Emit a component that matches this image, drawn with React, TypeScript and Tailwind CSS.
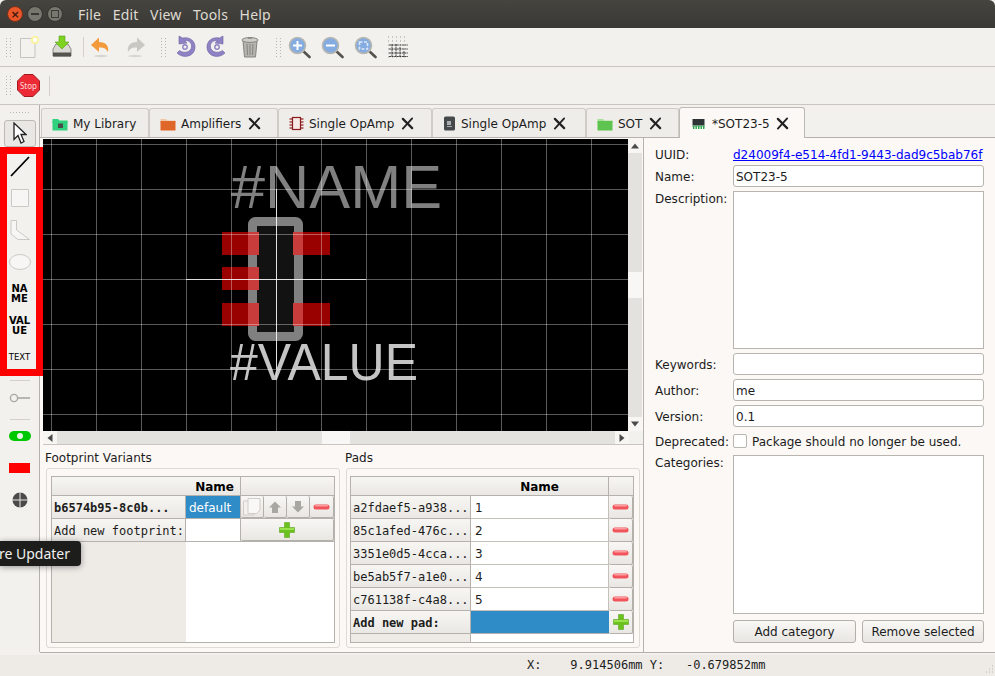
import React from 'react';

const Grip = () => (
  <div className="grid grid-cols-2 gap-x-[2px] gap-y-[2px] w-[5px]">
    {Array.from({ length: 14 }).map((_, i) => (
      <span key={i} className="w-[1px] h-[1px] bg-[#b9b6b0]" />
    ))}
  </div>
);

const Sep = () => <div className="w-[1px] h-[20px] bg-[#d3d0ca]" />;

const TabX = () => (
  <svg width="13" height="13" viewBox="0 0 14 13" className="shrink-0">
    <path d="M2 1.5 L12 11.5" stroke="#222" strokeWidth="2.4" strokeLinecap="round" />
    <path d="M12 1 L2 12" stroke="#222" strokeWidth="2" strokeLinecap="round" />
  </svg>
);

const Folder = ({ body, back, chip }: { body: string; back: string; chip?: boolean }) => (
  <svg width="16" height="14" viewBox="0 0 16 14" className="shrink-0">
    <path d="M0.5 2 H6 L7.5 3.5 H15.5 V6 H0.5 Z" fill={back} />
    <rect x="0.5" y="4" width="15" height="9.5" fill={body} />
    {chip && <rect x="6" y="6.5" width="5" height="4.5" fill="#4a4a4a" />}
  </svg>
);

const RedChip = () => (
  <svg width="15" height="15" viewBox="0 0 15 15" className="shrink-0">
    <rect x="3.5" y="1.5" width="8" height="12" fill="#f7e7e5" stroke="#8c1c1c" strokeWidth="1.2" />
    {[3, 6, 9, 12].map((y) => (
      <g key={y}>
        <path d={`M0.5 ${y} H3`} stroke="#8c1c1c" strokeWidth="1.2" />
        <path d={`M12 ${y} H14.5`} stroke="#8c1c1c" strokeWidth="1.2" />
      </g>
    ))}
  </svg>
);

const DarkChip = () => (
  <svg width="13" height="15" viewBox="0 0 13 15" className="shrink-0">
    <rect x="1" y="0.5" width="11" height="14" rx="1.5" fill="#45494b" />
    <rect x="4" y="5" width="4" height="4" fill="#a9adad" />
    <path d="M4 10.5 H9" stroke="#a9adad" />
  </svg>
);

const GreenChip = () => (
  <svg width="15" height="13" viewBox="0 0 15 13" className="shrink-0">
    <rect x="1.5" y="2" width="12" height="6.5" fill="#2e3436" />
    {[2, 4.5, 7, 9.5, 12].map((x) => (
      <rect key={x} x={x} y="8.5" width="1.4" height="3.5" fill="#27a04a" />
    ))}
    <rect x="1" y="9" width="13" height="1" fill="#3fb860" opacity="0.6" />
  </svg>
);

const tabs = [
  { w: 'w-[108px]', label: 'My Library', icon: <Folder body="#2fd17f" back="#2fd17f" chip />, close: false },
  { w: 'w-[129px]', label: 'Amplifiers', icon: <Folder body="#e0672a" back="#f0c8a8" />, close: true },
  { w: 'w-[154px]', label: 'Single OpAmp', icon: <RedChip />, close: true },
  { w: 'w-[154px]', label: 'Single OpAmp', icon: <DarkChip />, close: true },
  { w: 'w-[93px]', label: 'SOT', icon: <Folder body="#5fc34f" back="#a9df9a" />, close: true },
];

const NewDoc = () => (
  <svg width="22" height="24" viewBox="0 0 22 24">
    <path d="M1.5 3.5 H16 V22.5 H1.5 Z" fill="#f3f2ee" stroke="#c4c3bd" />
    <circle cx="16" cy="5" r="4" fill="#f9f29a" />
    <circle cx="16" cy="5" r="2.2" fill="#fff" />
  </svg>
);

const Install = () => (
  <svg width="24" height="24" viewBox="0 0 24 24">
    <path d="M3 14 L6 9 H18 L21 14 V21 H3 Z" fill="#d9d8d3" stroke="#8c8b86" />
    <rect x="3" y="17.5" width="18" height="4" fill="#55534e" />
    <path d="M9 1 H15 V7 H19 L12 14 L5 7 H9 Z" fill="#7ed321" stroke="#5a9e1a" strokeWidth="0.6" />
  </svg>
);

const Undo = ({ flip, color }: { flip?: boolean; color: string }) => (
  <svg width="20" height="22" viewBox="0 0 20 22" className={flip ? '-scale-x-100' : ''}>
    <path d="M1 9 L9 1.5 V6 C16 6 19 10 18 16 C16 12 13 11 9 11.5 V16 Z" fill={color} />
    <ellipse cx="11" cy="20" rx="7" ry="1.2" fill="#d8d6d1" />
  </svg>
);

const Rotate = ({ flip }: { flip?: boolean }) => (
  <svg width="21" height="24" viewBox="0 0 21 24" className={flip ? '-scale-x-100' : ''}>
    <path d="M4 1 L4 9 L12 8 L9.5 5.6 C14 5 17 8 16.5 12 C16 17 9 19 4.5 15.5 L2 18 C8 24 19 22 20 13 C20.5 6 15 1.5 7.5 3 Z" fill="#8f82c4" stroke="#6d62a3" strokeWidth="0.6" />
    <circle cx="10" cy="12" r="2.2" fill="none" stroke="#8f82c4" strokeWidth="1.4" />
  </svg>
);

const Trash = () => (
  <svg width="18" height="22" viewBox="0 0 18 22">
    <path d="M2 5 L3.5 21 H14.5 L16 5 Z" fill="#b5b4ae" stroke="#85847e" />
    <ellipse cx="9" cy="4" rx="8" ry="2.4" fill="#cfcec9" stroke="#85847e" />
    <path d="M6 8 L6.5 19 M9 8 V19 M12 8 L11.5 19" stroke="#85847e" />
    <path d="M7 2 H11" stroke="#85847e" strokeWidth="1.5" />
  </svg>
);

const Zoom = ({ mark }: { mark: 'in' | 'out' | 'fit' }) => (
  <svg width="23" height="23" viewBox="0 0 23 23">
    <path d="M14 14 L21.5 21" stroke="#55534e" strokeWidth="2.6" strokeLinecap="round" />
    <circle cx="9.5" cy="9.5" r="8" fill="#84ace0" stroke="#b8b7b1" strokeWidth="1.6" />
    {mark !== 'fit' && <path d="M5 9.5 H14" stroke="#fff" strokeWidth="2" />}
    {mark === 'in' && <path d="M9.5 5 V14" stroke="#fff" strokeWidth="2" />}
    {mark === 'fit' && <rect x="5.5" y="6" width="8" height="7" fill="none" stroke="#dce8f8" strokeWidth="1.6" strokeDasharray="3 1.5" />}
  </svg>
);

const GridIcon = () => (
  <svg width="22" height="22" viewBox="0 0 22 22">
    {[1, 5, 9, 13, 17, 21].map((p) => (
      <g key={p}>
        <path d={`M1 ${p} H21`} stroke="#9a9994" strokeDasharray="1 3" />
      </g>
    ))}
    <path d="M2 9 H21 M2 13 H21 M2 17 H21 M2 20.5 H21 M5 8 V21 M9 8 V21 M13 11 V21 M17 15 V21" stroke="#333" strokeWidth="0.9" strokeDasharray="2 0.6" />
  </svg>
);

const Stop = () => (
  <svg width="23" height="23" viewBox="0 0 23 23">
    <path d="M7 0.5 H16 L22.5 7 V16 L16 22.5 H7 L0.5 16 V7 Z" fill="#ec2b36" stroke="#a31a20" />
    <text x="11.5" y="14.5" textAnchor="middle" fontSize="8" fill="#fbdcdc" className="font-['Noto_Sans',sans-serif]">Stop</text>
  </svg>
);

const Minus = ({ w = 17 }: { w?: number }) => (
  <svg width={w} height="6" viewBox="0 0 17 6">
    <rect x="0.5" y="0.5" width="16" height="5" rx="2.5" fill="#f2545b" />
    <rect x="2" y="1" width="13" height="1.5" rx="0.7" fill="#fb9ca0" />
  </svg>
);

const Plus = () => (
  <svg width="16" height="16" viewBox="0 0 16 16">
    <path d="M5.5 0.5 H10.5 V5.5 H15.5 V10.5 H10.5 V15.5 H5.5 V10.5 H0.5 V5.5 H5.5 Z" fill="#6cc21d" stroke="#4f9c12" strokeWidth="0.5" />
    <path d="M1 6 H15 V8 H1 Z" fill="#9ae04f" />
  </svg>
);

const CellBtn = ({ children, className }: { children: React.ReactNode; className: string }) => (
  <div className={`h-full flex items-center justify-center border-r border-b border-[#b3b0aa] rounded-[2px] bg-gradient-to-b from-[#f8f7f5] to-[#e9e7e3] ${className}`}>
    {children}
  </div>
);

const Arrow = ({ up }: { up?: boolean }) => (
  <svg width="14" height="14" viewBox="0 0 14 14" className={up ? '' : 'rotate-180'}>
    <path d="M7 1.5 L13 7.5 H10 V13 H4 V7.5 H1 Z" fill="#a8a7a2" />
  </svg>
);

const CopyIcon = () => (
  <svg width="18" height="18" viewBox="0 0 18 18">
    <path d="M0.5 3 H11 V17 H0.5 Z" fill="#f2f1ee" stroke="#cfcdc8" />
    <path d="M5 0.5 H17 V12 L13.5 15.5 H5 Z" fill="#f9f8f6" stroke="#cfcdc8" />
  </svg>
);

const headerCell = 'bg-gradient-to-b from-[#f7f6f3] to-[#eae8e4] border-r border-b border-[#b5b2ad]';

const Input = ({ value }: { value?: string }) => (
  <div className="h-[22px] w-[251px] bg-white border border-[#b8b5af] rounded-[3px] px-[2px] pt-[1px] flex items-center text-[12px]">
    {value}
  </div>
);

const Label = ({ children }: { children: React.ReactNode }) => (
  <div className="w-[78px] shrink-0 text-[12px] leading-[14px] pt-[1px]">{children}</div>
);

const Button = ({ children, w }: { children: React.ReactNode; w: string }) => (
  <div className={`${w} h-[23px] border border-[#b3b0aa] rounded-[3px] bg-gradient-to-b from-[#f9f8f6] to-[#e8e6e2] flex items-center justify-center`}>
    {children}
  </div>
);

const padRows = [
  ['a2fdaef5-a938...', '1'],
  ['85c1afed-476c...', '2'],
  ['3351e0d5-4cca...', '3'],
  ['be5ab5f7-a1e0...', '4'],
  ['c761138f-c4a8...', '5'],
];

const Canvas = () => {
  const xs = [8, 53, 98, 143, 188, 233, 278, 323, 368, 413, 458, 503, 548];
  const ys = [5, 50, 95, 140, 185, 230, 275];
  return (
    <svg width="585" height="292" viewBox="0 0 585 292" className="block bg-black shrink-0">
      <text x="188" y="69" fontSize="62" fill="#808080" textLength="211" lengthAdjust="spacingAndGlyphs" className="font-['Liberation_Sans',sans-serif]">#NAME</text>
      <text x="187" y="241" fontSize="52" fill="#c4c4c4" textLength="188" lengthAdjust="spacingAndGlyphs" className="font-['Liberation_Sans',sans-serif]">#VALUE</text>
      {[
        [179, 93],
        [179, 128],
        [179, 164],
        [250, 93],
        [250, 164],
      ].map(([x, y], i) => (
        <rect key={i} x={x} y={y} width="37" height="23" fill="#990000" />
      ))}
      <rect x="209.5" y="82.5" width="46" height="115" rx="3" fill="#121212" stroke="#808080" strokeWidth="9" />
      {[
        [205, 93, 11],
        [205, 128, 11],
        [205, 164, 11],
        [250, 93, 10],
        [250, 164, 10],
      ].map(([x, y, w], i) => (
        <rect key={i} x={x} y={y} width={w} height="23" fill="#c93c3c" />
      ))}
      {xs.map((x) => (
        <path key={x} d={`M${x + 0.5} 0 V292`} stroke="#ffffff" strokeOpacity="0.35" />
      ))}
      {ys.map((y) => (
        <path key={y} d={`M0 ${y + 0.5} H585`} stroke="#ffffff" strokeOpacity="0.35" />
      ))}
      <path d="M143 140.5 H323 M233.5 50 V230" stroke="#ffffff" strokeOpacity="0.8" />
    </svg>
  );
};

const ScrollTri = ({ d }: { d: string }) => (
  <svg width="8" height="8" viewBox="0 0 8 8">
    <path d={d} fill="#4a4a4a" />
  </svg>
);

export default function App() {
  return (
    <div className="relative w-[995px] h-[676px] overflow-hidden flex flex-col bg-[#f2f1ed] text-[#1c1c1c] text-[12px] font-['DejaVu_Sans',sans-serif]">
      {/* title bar + menu */}
      <div className="h-[28px] shrink-0 flex items-center bg-gradient-to-b from-[#45443f] to-[#3a3935] rounded-t-[6px] pl-[7px]">
        <div className="flex items-center gap-[4px]">
          <span className="w-[16px] h-[16px] rounded-full bg-[#e8562a] border border-[#7a3018] flex items-center justify-center text-[11px] leading-none text-[#3c1a0c] font-bold">×</span>
          <span className="w-[16px] h-[16px] rounded-full bg-[#77766f] border border-[#33322e] flex items-center justify-center">
            <span className="w-[8px] h-[2px] bg-[#3a3935]" />
          </span>
          <span className="w-[16px] h-[16px] rounded-full bg-[#77766f] border border-[#33322e] flex items-center justify-center">
            <span className="w-[8px] h-[8px] border border-[#3a3935]" />
          </span>
        </div>
        <div className="ml-[15px] flex gap-[11.5px] tracking-[0.2px] text-[14px] text-[#dfdbd2] font-['Noto_Sans',sans-serif]">
          <span>File</span>
          <span>Edit</span>
          <span>View</span>
          <span>Tools</span>
          <span>Help</span>
        </div>
      </div>

      {/* main toolbar */}
      <div className="h-[39px] shrink-0 flex items-center border-b border-[#c9c6c0] pl-[6px]">
        <Grip />
        <div className="ml-[7px] w-[24px] flex justify-center"><NewDoc /></div>
        <div className="ml-[8px] w-[24px] flex justify-center"><Install /></div>
        <div className="ml-[9px]"><Sep /></div>
        <div className="ml-[6px]"><Undo color="#f39a3c" /></div>
        <div className="ml-[16px]"><Undo flip color="#c9c8c3" /></div>
        <div className="ml-[15px]"><Grip /></div>
        <div className="ml-[9px]"><Rotate /></div>
        <div className="ml-[10px]"><Rotate flip /></div>
        <div className="ml-[14px]"><Trash /></div>
        <div className="ml-[17px]"><Grip /></div>
        <div className="ml-[7px]"><Zoom mark="in" /></div>
        <div className="ml-[10px]"><Zoom mark="out" /></div>
        <div className="ml-[10px]"><Zoom mark="fit" /></div>
        <div className="ml-[10px]"><GridIcon /></div>
      </div>

      {/* second toolbar */}
      <div className="h-[38px] shrink-0 flex items-center border-b border-[#c9c6c0] pl-[6px]">
        <Grip />
        <div className="ml-[6px]"><Stop /></div>
        <div className="ml-[9px]"><Sep /></div>
      </div>

      <div className="flex-1 min-h-0 flex">
        {/* left tools */}
        <div className="w-[40px] shrink-0 flex flex-col items-center border-r border-[#b5b2ad] pt-[7px] mb-[3px]">
          <div className="flex gap-[2px] h-[2px]">
            {Array.from({ length: 7 }).map((_, i) => (
              <span key={i} className="w-[1px] h-[1px] bg-[#b9b6b0]" />
            ))}
          </div>
          <div className="mt-[6px] w-[32px] h-[27px] border border-[#bdbab4] rounded-[3px] bg-[#e9e7e3] flex items-center justify-center">
            <svg width="14" height="23" viewBox="0 0 14 23">
              <path d="M1 1 V17.5 L5 13.5 L8 21 L11 19.5 L8 12.5 H13 Z" fill="#fff" stroke="#222" strokeWidth="1.3" />
            </svg>
          </div>
          <div className="h-[32px] mt-[3px] flex items-center">
            <svg width="22" height="22" viewBox="0 0 22 22"><path d="M2 21 L20 2" stroke="#000" strokeWidth="1.8" /></svg>
          </div>
          <div className="h-[32px] flex items-center">
            <div className="w-[18px] h-[18px] bg-[#f7f6f4] border border-[#cbc9c4] rounded-[1px]" />
          </div>
          <div className="h-[32px] flex items-center">
            <svg width="20" height="20" viewBox="0 0 20 20"><path d="M1 0.5 H6.5 V10 L19.5 19.5 H8 L1 14 Z" fill="#f7f6f4" stroke="#cbc9c4" /></svg>
          </div>
          <div className="h-[32px] flex items-center">
            <svg width="22" height="16" viewBox="0 0 22 16"><ellipse cx="11" cy="8" rx="10.5" ry="7.5" fill="#f7f6f4" stroke="#cbc9c4" /></svg>
          </div>
          <div className="h-[32px] flex items-center justify-center text-center text-[10px] leading-[10px] font-bold text-black w-[22px] break-all">NA<br />ME</div>
          <div className="h-[32px] flex items-center justify-center text-center text-[10px] leading-[10px] font-bold text-black">VAL<br />UE</div>
          <div className="h-[31px] flex items-center text-[8.5px] text-black font-medium">TEXT</div>
          <div className="w-[20px] h-[1px] bg-[#d3d0ca] mt-[7px]" />
          <div className="h-[38px] pb-[4px] flex items-center">
            <svg width="22" height="10" viewBox="0 0 22 10">
              <circle cx="5" cy="5" r="3.6" fill="none" stroke="#a9a8a3" strokeWidth="1.4" />
              <path d="M9 5 H21" stroke="#a9a8a3" strokeWidth="1.6" />
            </svg>
          </div>
          <div className="w-[20px] h-[1px] bg-[#d3d0ca]" />
          <div className="h-[32px] flex items-center">
            <div className="w-[22px] h-[10px] rounded-full bg-[#00c800] flex items-center justify-center">
              <span className="w-[6px] h-[6px] rounded-full bg-[#e5f5e5]" />
            </div>
          </div>
          <div className="h-[32px] flex items-center">
            <div className="w-[21px] h-[10px] bg-[#ff0000]" />
          </div>
          <div className="h-[32px] flex items-center">
            <svg width="16" height="16" viewBox="0 0 16 16">
              <circle cx="8" cy="8" r="7.5" fill="#4a4a4a" />
              <path d="M0 8 H16 M8 0 V16" stroke="#e8e6e2" strokeWidth="1" />
            </svg>
          </div>
        </div>

        <div className="flex-1 min-w-0 flex flex-col">
          {/* tabs */}
          <div className="h-[33px] shrink-0 flex items-end border-b border-[#b5b2ad] pl-[1px]">
            {tabs.map((t, i) => (
              <div key={i} className={`${t.w} h-[29px] flex items-center pl-[10px] pt-[1px] gap-[5px] border border-b-0 border-[#cfccc6] rounded-t-[3px] bg-[#efedea]`}>
                {t.icon}
                <span className="whitespace-nowrap">{t.label}</span>
                {t.close && <span className="ml-[2px]"><TabX /></span>}
              </div>
            ))}
            <div className="w-[126px] h-[31px] -mb-[1px] flex items-center pl-[11px] pt-[1px] gap-[6px] border border-b-0 border-[#bdbab4] rounded-t-[3px] bg-[#fbf8f5]">
              <GreenChip />
              <span className="whitespace-nowrap">*SOT23-5</span>
              <TabX />
            </div>
          </div>

          <div className="flex-1 min-h-0 flex bg-[#fbf8f5] border-b border-[#b5b2ad] mb-[2px]">
            {/* editor column */}
            <div className="w-[604px] shrink-0 flex flex-col border-r border-[#b5b2ad] pl-[3px]">
              <div className="flex mt-[1px]">
                <Canvas />
                <div className="w-[14px] h-[292px] flex flex-col bg-[#e3e2de]">
                  <div className="h-[14px] bg-[#f7f6f3] flex items-center justify-center"><ScrollTri d="M4 1.5 L8 6.5 H0 Z" /></div>
                  <div className="h-[119px]" />
                  <div className="h-[26px] bg-[#f8f7f5]" />
                  <div className="flex-1" />
                  <div className="h-[14px] bg-[#f7f6f3] flex items-center justify-center"><ScrollTri d="M4 6.5 L0 1.5 H8 Z" /></div>
                </div>
              </div>
              <div className="flex h-[14px] shrink-0 bg-[#e3e2de] border-b border-[#c9c6c0]">
                <div className="w-[14px] bg-[#f7f6f3] flex items-center justify-center"><ScrollTri d="M1.5 4 L6.5 0 V8 Z" /></div>
                <div className="w-[265px]" />
                <div className="w-[28px] bg-[#f8f7f5]" />
                <div className="flex-1" />
                <div className="w-[14px] bg-[#f7f6f3] flex items-center justify-center"><ScrollTri d="M6.5 4 L1.5 0 V8 Z" /></div>
                <div className="w-[14px] bg-[#f2f1ed]" />
              </div>

              <div className="flex mt-[2px] pl-[1px] gap-[6px]">
                {/* footprint variants */}
                <div className="w-[295px] flex flex-col">
                  <div className="h-[20px] leading-[18px] pt-[2px] pl-[1px]">Footprint Variants</div>
                  <div className="mt-[1px] ml-[2px] w-[294px] h-[180px] border border-[#dedbd5] rounded-[3px] px-[4px] pt-[7px]">
                    <div className="w-[284px] h-[167px] border border-[#b5b2ad] flex flex-col bg-white">
                      <div className="flex h-[19px] font-bold shrink-0">
                        <div className={`w-[188px] flex items-center justify-end pr-[6px] pt-[1px] ${headerCell} border-r-0 text-black`}>Name</div>
                        <div className={`flex-1 ${headerCell} border-l border-r-0`} />
                      </div>
                      <div className="flex h-[23px] shrink-0">
                        <div className={`w-[134px] flex items-center pl-[2px] pt-[1px] font-['DejaVu_Sans_Mono',monospace] font-bold ${headerCell}`}>b6574b95-8c0b...</div>
                        <div className="w-[54px] bg-[#308cc6] text-white flex items-center pl-[3px] pt-[1px] border-b border-[#b5b2ad]">default</div>
                        <div className="flex-1 flex bg-[#f2f1ed] border-b border-l border-[#b5b2ad]">
                          <CellBtn className="w-[23px]"><CopyIcon /></CellBtn>
                          <CellBtn className="w-[23px]"><Arrow up /></CellBtn>
                          <CellBtn className="w-[23px]"><Arrow /></CellBtn>
                          <CellBtn className="flex-1"><Minus /></CellBtn>
                        </div>
                      </div>
                      <div className="flex h-[23px] shrink-0">
                        <div className={`w-[134px] flex items-center pl-[2px] pt-[1px] font-['DejaVu_Sans_Mono',monospace] ${headerCell}`}>Add new footprint:</div>
                        <div className="w-[54px] border-b border-[#b5b2ad]" />
                        <div className="flex-1 border-b border-l border-[#b5b2ad]">
                          <CellBtn className="w-full"><Plus /></CellBtn>
                        </div>
                      </div>
                      <div className="flex-1 w-[134px] bg-[#eeebe7]" />
                    </div>
                  </div>
                </div>

                {/* pads */}
                <div className="w-[295px] flex flex-col">
                  <div className="h-[20px] leading-[18px] pt-[2px]">Pads</div>
                  <div className="mt-[1px] ml-[1px] h-[180px] border border-[#dedbd5] rounded-[3px] px-[3px] pt-[7px] w-[294px]">
                    <div className="w-[284px] h-[167px] border border-[#b5b2ad] flex flex-col bg-white">
                      <div className="flex h-[19px] font-bold shrink-0">
                        <div className={`w-[258px] flex items-center justify-end pr-[49px] pt-[1px] ${headerCell} text-black`}>Name</div>
                        <div className={`flex-1 ${headerCell} border-r-0`} />
                      </div>
                      {padRows.map(([id, n]) => (
                        <div key={id} className="flex h-[23px] shrink-0">
                          <div className={`w-[120px] flex items-center pl-[2px] pt-[1px] font-['DejaVu_Sans_Mono',monospace] ${headerCell}`}>{id}</div>
                          <div className="w-[138px] flex items-center pl-[4px] pt-[1px] border-r border-b border-[#c4c1bb]">{n}</div>
                          <div className="flex-1 bg-[#f2f1ed]">
                            <CellBtn className="w-full"><Minus /></CellBtn>
                          </div>
                        </div>
                      ))}
                      <div className="flex h-[23px] shrink-0">
                        <div className={`w-[120px] flex items-center pl-[2px] pt-[1px] font-['DejaVu_Sans_Mono',monospace] font-bold ${headerCell}`}>Add new pad:</div>
                        <div className="w-[138px] bg-[#308cc6] border-b border-[#b5b2ad]" />
                        <div className="flex-1 bg-[#f2f1ed]">
                          <CellBtn className="w-full"><Plus /></CellBtn>
                        </div>
                      </div>
                      <div className="flex-1 w-[120px] bg-[#eeebe7] border-r border-[#b5b2ad]" />
                    </div>
                  </div>
                </div>
              </div>
            </div>

            {/* properties */}
            <div className="flex-1 min-w-0 pl-[11px] pt-[5px] flex flex-col">
              <div className="flex items-center h-[22px]">
                <Label>UUID:</Label>
                <span className="text-[#0000ff] underline whitespace-nowrap pt-[1px]">d24009f4-e514-4fd1-9443-dad9c5bab76f</span>
              </div>
              <div className="flex items-center h-[22px]">
                <Label>Name:</Label>
                <Input value="SOT23-5" />
              </div>
              <div className="flex mt-[4px]">
                <Label>Description:</Label>
                <div className="w-[251px] h-[158px] bg-white border border-[#b8b5af]" />
              </div>
              <div className="flex items-center mt-[4px]">
                <Label>Keywords:</Label>
                <Input />
              </div>
              <div className="flex items-center mt-[4px]">
                <Label>Author:</Label>
                <Input value="me" />
              </div>
              <div className="flex items-center mt-[4px]">
                <Label>Version:</Label>
                <Input value="0.1" />
              </div>
              <div className="flex items-center mt-[4px] h-[20px]">
                <Label>Deprecated:</Label>
                <span className="w-[14px] h-[14px] bg-white border border-[#b8b5af] rounded-[2px]" />
                <span className="ml-[5px] whitespace-nowrap pt-[1px]">Package should no longer be used.</span>
              </div>
              <div className="flex mt-[4px]">
                <Label>Categories:</Label>
                <div className="w-[251px] h-[159px] bg-white border border-[#b8b5af]" />
              </div>
              <div className="flex mt-[6px] pl-[78px] gap-[6px]">
                <Button w="w-[123px]">Add category</Button>
                <Button w="w-[122px]">Remove selected</Button>
              </div>
            </div>
          </div>
        </div>
      </div>

      {/* status bar */}
      <div className="h-[21px] shrink-0 flex items-center justify-between pb-[1px] font-['DejaVu_Sans_Mono',monospace] bg-[#eeebe6] whitespace-pre pl-[527px] pr-[1px]">
        <span>X:    9.914506mm Y:   -0.679852mm</span>
        <svg width="11" height="11" viewBox="0 0 11 11" className="self-end">
          <path d="M9.5 1.5 V2.5 M6.5 4.5 V5.5 M9.5 4.5 V5.5 M3.5 7.5 V8.5 M6.5 7.5 V8.5 M9.5 7.5 V8.5" stroke="#b9b6b0" />
        </svg>
      </div>

      {/* tooltip from another window */}
      <div className="absolute left-0 top-[541px] w-[81px] h-[25px] rounded-r-[4px] bg-[#1d1d1b] shadow-[0_1px_6px_rgba(0,0,0,0.4)] overflow-hidden flex items-center justify-end pr-[11px] text-[14px] text-[#f0f0ee] font-['Noto_Sans',sans-serif] whitespace-nowrap">
        Software Updater
      </div>

      {/* red annotation */}
      <div className="absolute left-0 top-[147px] w-[43px] h-[229px] border-[7px] border-[#ff0000] pointer-events-none" />
    </div>
  );
}
